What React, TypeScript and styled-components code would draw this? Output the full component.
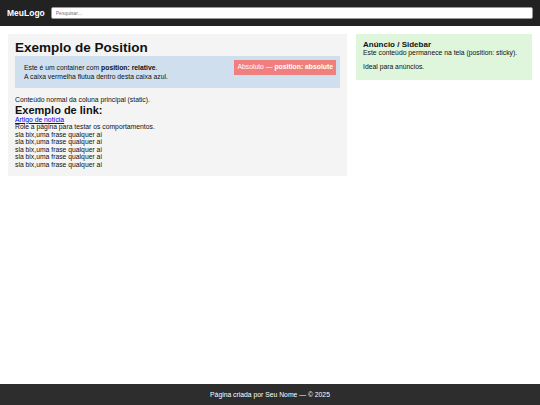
import React from "react";
import styled, { createGlobalStyle } from "styled-components";

const Global = createGlobalStyle`
  html, body { margin: 0; padding: 0; }
  body {
    font-family: "Liberation Sans", Arial, sans-serif;
    font-size: 6.8px;
    line-height: 7.5px;
    color: #111;
    background: #fff;
  }
  * { box-sizing: border-box; }
`;

const Page = styled.div`
  min-height: 100vh;
  display: flex;
  flex-direction: column;
`;

const Header = styled.header`
  height: 26px;
  background: #222;
  display: flex;
  align-items: center;
  gap: 6px;
  padding: 0 7px;
`;

const Logo = styled.div`
  color: #fff;
  font-weight: bold;
  font-size: 8.5px;
  line-height: 10px;
`;

const Search = styled.input`
  flex: 1;
  height: 12px;
  border: 1px solid #999;
  border-radius: 2px;
  background: #fff;
  font-family: "Liberation Sans", Arial, sans-serif;
  font-size: 5px;
  padding: 0 4px;
  outline: none;
  &::placeholder { color: #777; }
`;

const Main = styled.main`
  flex: 1;
  display: grid;
  grid-template-columns: 1fr 176px;
  gap: 9px;
  padding: 8px;
  align-items: start;
`;

const Content = styled.section`
  background: #f4f4f4;
  padding: 6px 7px 8px;
`;

const Title = styled.h1`
  margin: 0 0 1px;
  font-size: 13.5px;
  line-height: 15px;
`;

const RelBox = styled.div`
  position: relative;
  background: #d0dfee;
  padding: 8px 9px 7px;
  line-height: 8.5px;
  margin-bottom: 8px;
`;

const AbsBadge = styled.div`
  position: absolute;
  top: 4px;
  right: 4px;
  background: #f08080;
  color: #fff;
  padding: 3px 3px;
`;

const Text = styled.p`
  margin: 0;
`;

const SubTitle = styled.h2`
  margin: 0;
  font-size: 11px;
  line-height: 12px;
`;

const LinkLine = styled.div``;

const Link = styled.a`
  color: #00e;
  text-decoration: underline;
`;

const Sidebar = styled.aside`
  position: sticky;
  top: 0;
  background: #dff5dc;
  padding: 6px 7px 10px;
`;

const SideTitle = styled.h3`
  margin: 0;
  font-size: 8px;
  line-height: 9px;
`;

const SideText = styled.p<{ $gap?: boolean }>`
  margin: ${(p) => (p.$gap ? "6px 0 0" : "0")};
`;

const Footer = styled.footer`
  height: 21px;
  background: #2d2d2d;
  color: #fff;
  display: flex;
  align-items: center;
  justify-content: center;
`;

export default function App() {
  return (
    <Page>
      <Global />
      <Header>
        <Logo>MeuLogo</Logo>
        <Search placeholder="Pesquisar..." />
      </Header>
      <Main>
        <Content>
          <Title>Exemplo de Position</Title>
          <RelBox>
            Este é um container com <b>position: relative</b>.
            <br />
            A caixa vermelha flutua dentro desta caixa azul.
            <AbsBadge>
              Absoluto — <b>position: absolute</b>
            </AbsBadge>
          </RelBox>
          <Text>Conteúdo normal da coluna principal (static).</Text>
          <SubTitle>Exemplo de link:</SubTitle>
          <LinkLine>
            <Link href="#">Artigo de notícia</Link>
          </LinkLine>
          <Text>Role a página para testar os comportamentos.</Text>
          {Array.from({ length: 5 }).map((_, i) => (
            <Text key={i}>sla bix,uma frase qualquer ai</Text>
          ))}
        </Content>
        <Sidebar>
          <SideTitle>Anúncio / Sidebar</SideTitle>
          <SideText>Este conteúdo permanece na tela (position: sticky).</SideText>
          <SideText $gap>Ideal para anúncios.</SideText>
        </Sidebar>
      </Main>
      <Footer>Página criada por Seu Nome — © 2025</Footer>
    </Page>
  );
}
